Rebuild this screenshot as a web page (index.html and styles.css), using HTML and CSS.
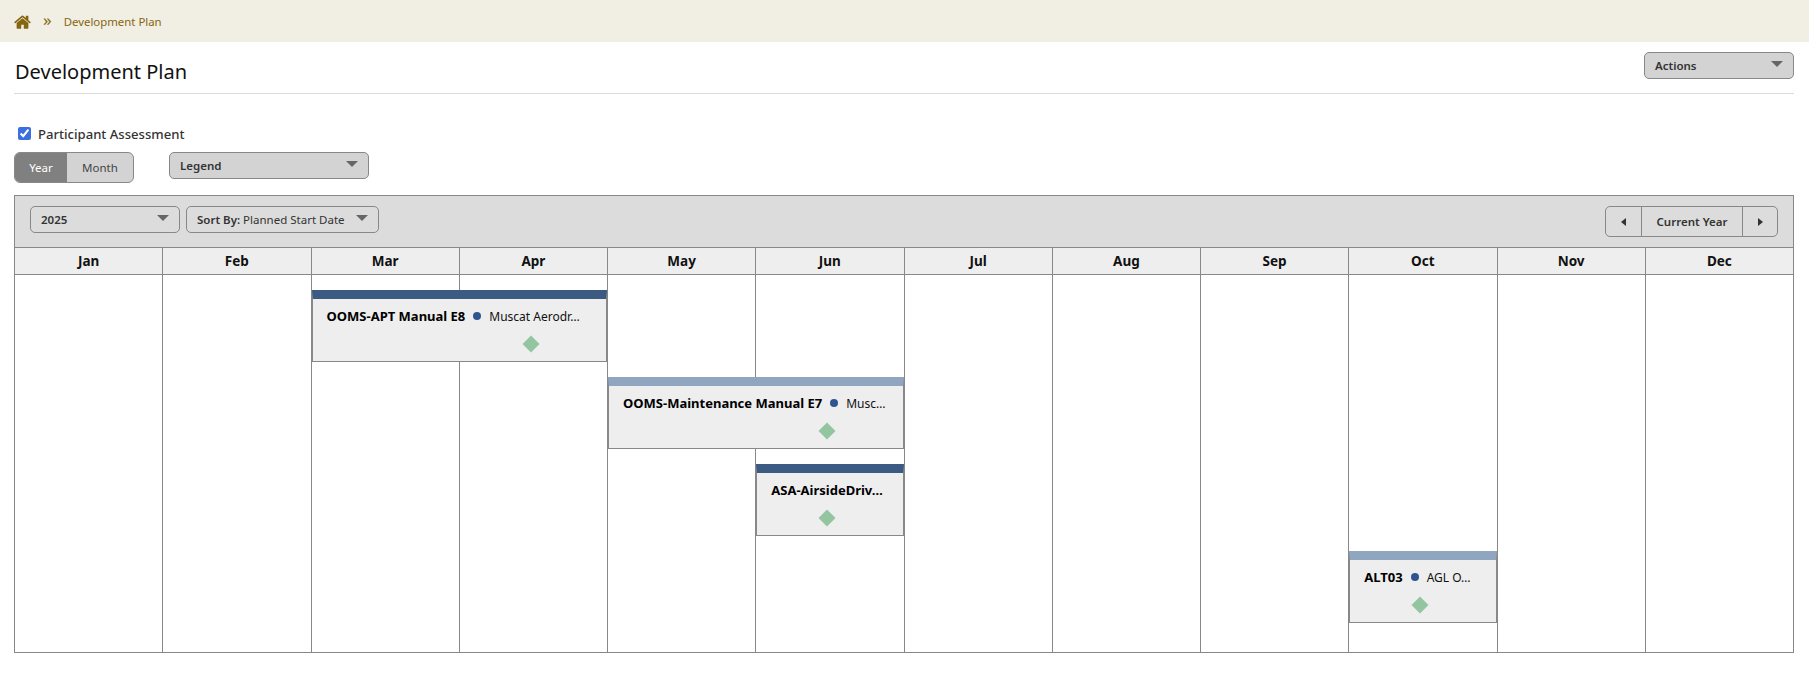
FILE: index.html
```html
<!DOCTYPE html>
<html lang="en">
<head>
<meta charset="utf-8">
<title>Development Plan</title>
<link rel="stylesheet" href="styles.css">
</head>
<body>
<nav class="crumbs">
  <svg class="home" viewBox="0 130 1664 1400" aria-hidden="true"><path d="M1408 992v480q0 26-19 45t-45 19h-384v-384h-256v384h-384q-26 0-45-19t-19-45v-480q0-1 .5-3t.5-3l575-474 575 474q1 2 1 6zm223-69l-62 74q-8 9-21 11h-3q-13 0-21-7l-692-577-692 577q-12 8-24 7-13-2-21-11l-62-74q-8-10-7-23.5t11-21.5l719-599q32-26 76-26t76 26l244 204v-195q0-14 9-23t23-9h192q14 0 23 9t9 23v408l219 182q10 8 11 21.5t-7 23.5z"/></svg>
  <span class="sep">»</span>
  <span class="crumb">Development Plan</span>
</nav>
<main class="page">
  <header class="head">
    <h1>Development Plan</h1>
    <button class="drop actions"><b>Actions</b><i class="caret"></i></button>
  </header>
  <label class="check"><input type="checkbox" checked><span>Participant Assessment</span></label>
  <div class="controls">
    <div class="toggle"><span class="on">Year</span><span class="off">Month</span></div>
    <button class="drop legend"><b>Legend</b><i class="caret"></i></button>
  </div>
  <section class="cal">
    <div class="bar">
      <button class="drop year"><b>2025</b><i class="caret"></i></button>
      <button class="drop sort"><span><b>Sort By:</b> Planned Start Date</span><i class="caret"></i></button>
      <div class="nav">
        <span class="prev"><i class="tri-l"></i></span>
        <span class="cur">Current Year</span>
        <span class="next"><i class="tri-r"></i></span>
      </div>
    </div>
    <div class="months">
      <div>Jan</div><div>Feb</div><div>Mar</div><div>Apr</div><div>May</div><div>Jun</div><div>Jul</div><div>Aug</div><div>Sep</div><div>Oct</div><div>Nov</div><div>Dec</div>
    </div>
    <div class="grid">
      <div class="col c1"></div><div class="col c2"></div><div class="col c3"></div><div class="col c4"></div><div class="col c5"></div><div class="col c6"></div><div class="col c7"></div><div class="col c8"></div><div class="col c9"></div><div class="col c10"></div><div class="col c11"></div><div class="col c12"></div>
      <article class="ev e1 dark">
        <p><b>OOMS-APT Manual E8</b><i class="dot"></i>Muscat Aerodr…</p>
        <i class="gem long"></i>
      </article>
      <article class="ev e2 light">
        <p><b>OOMS-Maintenance Manual E7</b><i class="dot"></i>Musc…</p>
        <i class="gem long"></i>
      </article>
      <article class="ev e3 dark">
        <p><b>ASA-AirsideDriv…</b></p>
        <i class="gem short"></i>
      </article>
      <article class="ev e4 light">
        <p><b>ALT03</b><i class="dot"></i>AGL O…</p>
        <i class="gem short"></i>
      </article>
    </div>
  </section>
</main>
</body>
</html>
```
FILE: styles.css
```css
* { box-sizing: border-box; }
html, body { margin: 0; padding: 0; background: #fff; }
body { font-family: "Noto Sans", "Open Sans", sans-serif; color: #222; overflow: hidden; }
button { font: inherit; color: inherit; margin: 0; cursor: default; }

.crumbs { height: 42px; background: #f1efe4; display: flex; align-items: center; padding-left: 14px; color: #85660f; font-size: 11.4px; }
.home { width: 17px; height: 15px; fill: #85660f; }
.sep { margin-left: 12px; font-size: 17px; line-height: 1; position: relative; top: -2px; }
.crumb { margin-left: 12px; }

.page { padding: 0 15px 0 14px; }
.head { height: 52px; border-bottom: 1px solid #dcdcdc; display: flex; justify-content: space-between; align-items: flex-start; padding-top: 10px; }
h1 { margin: 0; font-weight: 400; font-size: 20px; line-height: 26px; color: #111; position: relative; top: 7px; left: 1px; }

.drop { display: flex; align-items: center; justify-content: space-between; background: #d3d3d3; border: 1px solid #888; border-radius: 5px; padding: 0 10px 1px; font-size: 11.5px; color: #333; }
.drop b { font-weight: 600; }
.caret { width: 0; height: 0; border-left: 6px solid transparent; border-right: 6px solid transparent; border-top: 6px solid #666; margin-top: -3px; }
.actions { width: 150px; height: 27px; }

.check { display: flex; align-items: center; height: 20px; margin-top: 30px; padding-left: 4px; font-size: 13.1px; font-weight: 500; color: #333; }
.check input { width: 13px; height: 13px; margin: 0 7px 2px 0; accent-color: #3b6fe0; }

.controls { display: flex; align-items: flex-start; margin-top: 8px; }
.toggle { width: 120px; height: 31px; display: flex; border: 1px solid #888; border-radius: 6px; overflow: hidden; font-size: 11.5px; background: #d3d3d3; }
.toggle span { display: flex; align-items: center; justify-content: center; }
.on { width: 52px; background: #808080; color: #fff; }
.off { flex: 1; color: #444; }
.legend { width: 200px; height: 27px; margin-left: 35px; }

.cal { margin-top: 12px; }
.bar { height: 52px; background: #dcdcdc; border: 1px solid #888; border-bottom: 0; display: flex; align-items: flex-start; padding: 10px 15px; }
.bar .drop { background: #dcdcdc; }
.year { width: 150px; height: 27px; }
.sort { width: 193px; height: 27px; margin-left: 6px; }
.sort span { white-space: nowrap; }
.nav { margin-left: auto; width: 173px; height: 31px; display: flex; border: 1px solid #888; border-radius: 5px; font-size: 11.5px; font-weight: 600; color: #333; }
.nav span { display: flex; align-items: center; justify-content: center; }
.prev { width: 36px; border-right: 1px solid #888; }
.cur { flex: 1; }
.next { width: 35px; border-left: 1px solid #888; }
.tri-l { border: 4px solid transparent; border-left: 0; border-right: 5px solid #333; }
.tri-r { border: 4px solid transparent; border-right: 0; border-left: 5px solid #333; }

.months { display: grid; grid-template-columns: repeat(12, 1fr); height: 28px; background: #eee; border-top: 1px solid #888; border-bottom: 1px solid #888; border-left: 1px solid #888; }
.months div { display: flex; align-items: center; justify-content: center; font-size: 13.5px; font-weight: 700; color: #111; border-right: 1px solid #888; }

.grid { display: grid; grid-template-columns: repeat(12, 1fr); grid-template-rows: 15px 72px 15px 72px 15px 72px 15px 72px 29px; border-left: 1px solid #888; border-bottom: 1px solid #888; }
.col { grid-row: 1 / -1; border-right: 1px solid #888; }
.c1 { grid-column: 1; } .c2 { grid-column: 2; } .c3 { grid-column: 3; } .c4 { grid-column: 4; }
.c5 { grid-column: 5; } .c6 { grid-column: 6; } .c7 { grid-column: 7; } .c8 { grid-column: 8; }
.c9 { grid-column: 9; } .c10 { grid-column: 10; } .c11 { grid-column: 11; } .c12 { grid-column: 12; }

.ev { background: #eee; border: 1px solid #888; min-width: 0; z-index: 1; margin-right: 1px; }
.e1 { grid-column: 3 / span 2; grid-row: 2; }
.e2 { grid-column: 5 / span 2; grid-row: 4; }
.e3 { grid-column: 6; grid-row: 6; }
.e4 { grid-column: 10; grid-row: 8; }
.dark { border-top: 9px solid #3b5b82; }
.light { border-top: 9px solid #8fa5c0; }
.ev p { margin: 0; padding: 8px 0 0 14px; height: 31px; line-height: 18px; font-size: 12px; color: #111; white-space: nowrap; overflow: hidden; }
.ev b { font-size: 13px; font-weight: 700; color: #000; }
.dot { display: inline-block; width: 8px; height: 8px; border-radius: 50%; background: #2f5590; margin: 0 8px 1px 8px; }
.gem { display: block; width: 12px; height: 12px; background: #93c6a0; transform: rotate(45deg); margin-top: 8px; }
.long { margin-left: 212px; }
.short { margin-left: 64px; }
```
